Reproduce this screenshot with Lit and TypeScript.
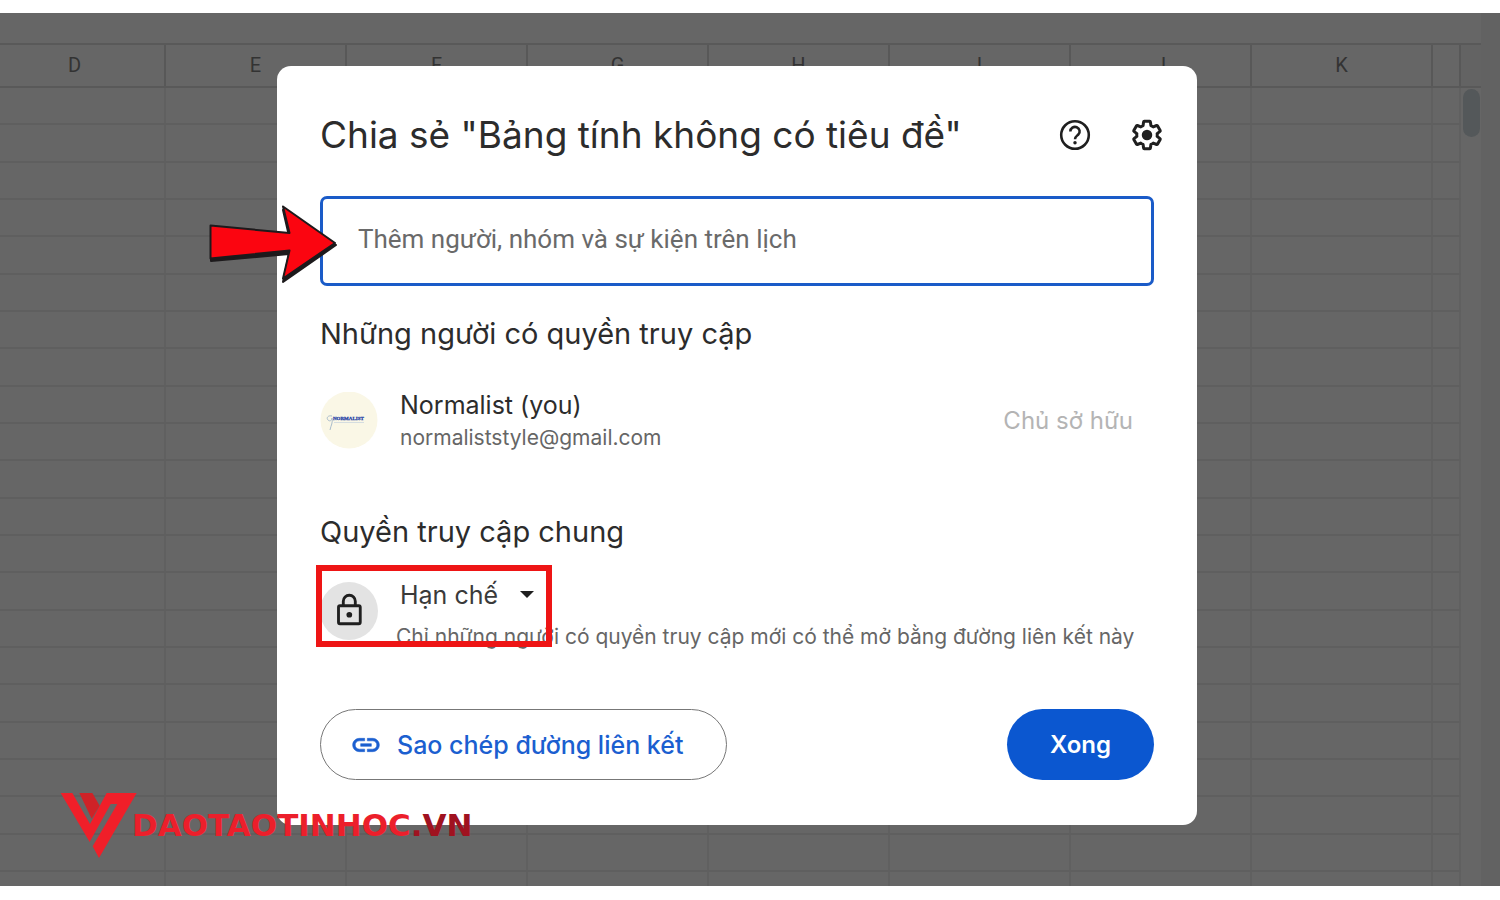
import { LitElement, html, css, svg } from "lit";
import { customElement } from "lit/decorators.js";

const COLUMNS = ["D", "E", "F", "G", "H", "I", "J", "K"];
const ROWS = Array.from({ length: 22 }, (_, i) => i);

const GEAR =
  "M19.43 12.98c.04-.32.07-.64.07-.98 0-.34-.03-.66-.07-.98l2.11-1.65c.19-.15.24-.42.12-.64l-2-3.46c-.09-.16-.26-.25-.44-.25-.06 0-.12.01-.17.03l-2.49 1c-.52-.4-1.08-.73-1.69-.98l-.38-2.65C14.46 2.18 14.25 2 14 2h-4c-.25 0-.46.18-.49.42l-.38 2.65c-.61.25-1.17.59-1.69.98l-2.49-1c-.06-.02-.12-.03-.18-.03-.17 0-.34.09-.43.25l-2 3.46c-.13.22-.07.49.12.64l2.11 1.65c-.04.32-.07.65-.07.98 0 .33.03.66.07.98l-2.11 1.65c-.19.15-.24.42-.12.64l2 3.46c.09.16.26.25.44.25.06 0 .12-.01.17-.03l2.49-1c.52.4 1.08.73 1.69.98l.38 2.65c.03.24.24.42.49.42h4c.25 0 .46-.18.49-.42l.38-2.65c.61-.25 1.17-.59 1.69-.98l2.49 1c.06.02.12.03.18.03.17 0 .34-.09.43-.25l2-3.46c.12-.22.07-.49-.12-.64l-2.11-1.65z";

@customElement("sheet-grid")
export class SheetGrid extends LitElement {
  static styles = css`
    :host {
      display: flex;
      min-height: 0;
      overflow: hidden;
      background: #666;
      font-family: Roboto, sans-serif;
    }
    .sheet {
      flex: 1;
      min-width: 0;
      display: flex;
      flex-direction: column;
      padding-top: 30px;
      overflow: hidden;
    }
    table {
      flex: 1;
      min-height: 0;
      display: flex;
      flex-direction: column;
      margin-left: -15px;
      border-top: 2px solid #595959;
    }
    tr {
      display: grid;
      grid-template-columns: repeat(8, 181px) 1fr;
    }
    thead tr {
      height: 43px;
      box-sizing: border-box;
      border-bottom: 2px solid #595959;
    }
    th {
      padding: 0;
      border-right: 2px solid #585858;
      font-size: 20px;
      font-weight: 400;
      line-height: 40px;
      color: #333;
    }
    td {
      padding: 0;
      border-right: 2px solid #606060;
    }
    tbody {
      flex: 1;
      min-height: 0;
      display: grid;
      grid-template-rows: repeat(21, 1fr) 14px;
    }
    tbody tr {
      border-bottom: 2px solid #5f5f5f;
    }
    tbody tr:last-child {
      border-bottom: 0;
    }
    .rail {
      width: 20px;
      padding-top: 30px;
    }
    .rail-head {
      height: 41px;
      border-top: 2px solid #595959;
      border-bottom: 2px solid #595959;
      background: #636363;
    }
    .thumb {
      width: 17px;
      height: 48px;
      margin: 1px auto 0;
      border-radius: 9px;
      background: #54585a;
    }
    .edge {
      width: 19px;
      background: #626262;
    }
  `;

  render() {
    return html`
      <div class="sheet">
        <table>
          <thead>
            <tr>
              ${COLUMNS.map((c) => html`<th scope="col">${c}</th>`)}
              <th></th>
            </tr>
          </thead>
          <tbody>
            ${ROWS.map(
              () => html`<tr>
                ${COLUMNS.map(() => html`<td></td>`)}
                <td></td>
              </tr>`
            )}
          </tbody>
        </table>
      </div>
      <div class="rail">
        <div class="rail-head"></div>
        <div class="thumb"></div>
      </div>
      <div class="edge"></div>
    `;
  }
}

@customElement("share-dialog")
export class ShareDialog extends LitElement {
  static styles = css`
    :host {
      display: block;
      position: relative;
      box-sizing: border-box;
      width: 920px;
      max-width: 100%;
      padding: 44px 0 45px;
      border-radius: 14px;
      background: #fff;
      color: #2c2c2c;
      font-family: Inter, sans-serif;
    }
    header {
      display: flex;
      align-items: center;
      gap: 24px;
      height: 50px;
      padding: 0 26px 0 43px;
    }
    h1,
    h2,
    p {
      margin: 0;
      font-weight: 400;
      white-space: nowrap;
    }
    h1 {
      flex: 1;
      font-size: 37px;
      line-height: 50px;
    }
    button,
    input,
    select {
      font-family: inherit;
      margin: 0;
    }
    .icon-button {
      display: grid;
      place-items: center;
      width: 48px;
      height: 48px;
      padding: 0;
      border: 0;
      border-radius: 50%;
      background: none;
      color: #1f1f1f;
    }
    .icon {
      display: block;
      width: 36px;
      height: 36px;
    }
    .body {
      padding: 36px 43px 0;
    }
    .people {
      display: block;
      box-sizing: border-box;
      width: 100%;
      height: 90px;
      padding: 0 35px 4px;
      border: 3px solid #1a5bc8;
      border-radius: 7px;
      outline: 0;
      background: #fff;
      color: #1f1f1f;
      font-family: Roboto, sans-serif;
      font-size: 26px;
    }
    .people::placeholder {
      color: #6a6a6a;
      opacity: 1;
    }
    h2 {
      font-size: 29px;
      line-height: 40px;
    }
    .people + h2 {
      margin-top: 28px;
    }
    .person {
      display: flex;
      align-items: center;
      gap: 22px;
      margin: 34px 0 58px;
    }
    .avatar {
      flex: none;
      width: 58px;
      height: 58px;
    }
    .who {
      flex: 1;
    }
    .name {
      font-size: 25px;
      line-height: 34px;
    }
    .mail {
      font-size: 21px;
      line-height: 32px;
      color: #666;
    }
    .role {
      padding-right: 21px;
      font-size: 24px;
      line-height: 32px;
      color: #b4b4b4;
    }
    .access {
      position: relative;
      display: flex;
      gap: 18px;
      margin-top: 25px;
    }
    .lock {
      flex: none;
      display: grid;
      place-items: center;
      width: 58px;
      height: 58px;
      margin-top: 5px;
      border-radius: 50%;
      background: #e3e3e3;
    }
    .scope {
      display: inline-flex;
      align-items: center;
      position: relative;
    }
    .scope select {
      appearance: none;
      height: 36px;
      padding: 0 40px 0 4px;
      border: 0;
      background: none;
      color: #3a3a3a;
      font-size: 25px;
    }
    .caret {
      position: absolute;
      right: 4px;
      width: 16px;
      height: 8px;
      pointer-events: none;
    }
    .hint {
      margin-top: 8px;
      font-size: 21px;
      line-height: 32px;
      color: #666;
    }
    .highlight {
      position: absolute;
      left: -4px;
      top: -12px;
      box-sizing: border-box;
      width: 236px;
      height: 82px;
      border: 6px solid #ee1515;
      pointer-events: none;
    }
    footer {
      display: flex;
      justify-content: space-between;
      margin-top: 56px;
    }
    .copy,
    .done {
      display: flex;
      align-items: center;
      justify-content: center;
      height: 71px;
      border-radius: 36px;
      font-size: 25px;
      white-space: nowrap;
    }
    .copy {
      gap: 15px;
      padding: 0 43px 0 29px;
      border: 1px solid #777;
      background: #fff;
      color: #1b5fd0;
      font-weight: 500;
    }
    .copy svg {
      width: 32px;
      height: 32px;
    }
    .done {
      padding: 0 43px;
      border: 0;
      background: #0b57d0;
      color: #fff;
      font-size: 24px;
      font-weight: 600;
    }
    .arrow {
      position: absolute;
      left: -69px;
      top: 136px;
      width: 132px;
      height: 84px;
      pointer-events: none;
    }
  `;

  render() {
    return html`
      <header>
        <h1>Chia sẻ "Bảng tính không có tiêu đề"</h1>
        <button class="icon-button" aria-label="Trợ giúp">
          <svg class="icon" viewBox="0 0 24 24" fill="none" stroke="currentColor">
            <circle cx="12" cy="12" r="9.200" stroke-width="1.700" />
            <path d="M8.900 9.600a3.100 3 0 1 1 5.300 2.100c-1.100 1-2.200 1.500-2.200 3.100" stroke-width="1.700" />
            <circle cx="12" cy="17.100" r="1.150" fill="currentColor" stroke="none" />
          </svg>
        </button>
        <button class="icon-button" aria-label="Cài đặt">
          <svg class="icon" viewBox="0 0 24 24">
            <g transform="translate(12 12) scale(.91) translate(-12 -12)">
              <path d=${GEAR} fill="none" stroke="currentColor" stroke-width="2.200" stroke-linejoin="round" />
            </g>
            <circle cx="12" cy="12" r="3.500" fill="currentColor" />
          </svg>
        </button>
      </header>
      <div class="body">
        <input
          class="people"
          type="text"
          aria-label="Thêm người, nhóm và sự kiện trên lịch"
          placeholder="Thêm người, nhóm và sự kiện trên lịch"
        />
        <h2>Những người có quyền truy cập</h2>
        <div class="person">
          <svg class="avatar" viewBox="0 0 58 58" aria-hidden="true">
            <circle cx="29" cy="28" r="28.500" fill="#faf7e6" />
            <text
              x="13"
              y="28"
              font-family="Liberation Serif, serif"
              font-weight="700"
              font-size="5"
              fill="#2b46a8"
              stroke="#2b46a8"
              stroke-width=".3"
            >NORMALIST</text>
            <path d="M12 24c-4-1-6 2-4 4s4 0 4-2c1 5-1 7-2 12" fill="none" stroke="#a9bccb" stroke-width="1" />
            <path d="M14 30.500h30" stroke="#d5dde0" stroke-width="1" />
          </svg>
          <div class="who">
            <p class="name">Normalist (you)</p>
            <p class="mail">normaliststyle@gmail.com</p>
          </div>
          <p class="role">Chủ sở hữu</p>
        </div>
        <h2>Quyền truy cập chung</h2>
        <div class="access">
          <div class="lock">
            <svg class="icon" viewBox="0 0 24 24" fill="none" stroke="#1f1f1f" stroke-width="1.900">
              <rect x="5" y="8.500" width="14.500" height="12" rx="1" />
              <path d="M8.200 8.500V5.500a4 4 0 0 1 8 0v3" />
              <circle cx="12.200" cy="14.500" r="1.900" fill="#1f1f1f" stroke="none" />
            </svg>
          </div>
          <div>
            <div class="scope">
              <select aria-label="Quyền truy cập chung">
                <option>Hạn chế</option>
              </select>
              <svg class="caret" viewBox="0 0 16 8" aria-hidden="true"><path d="M1 0h14L8 7z" fill="#1f1f1f" /></svg>
            </div>
            <p class="hint">Chỉ những người có quyền truy cập mới có thể mở bằng đường liên kết này</p>
          </div>
          <div class="highlight"></div>
        </div>
        <footer>
          <button class="copy">
            <svg viewBox="0 0 24 24" fill="currentColor" aria-hidden="true">
              <path
                d="M3.900 12c0-1.710 1.390-3.100 3.100-3.100h4V7H7c-2.760 0-5 2.240-5 5s2.240 5 5 5h4v-1.900H7c-1.710 0-3.100-1.390-3.100-3.100zM8 13h8v-2H8v2zm9-6h-4v1.900h4c1.710 0 3.100 1.390 3.100 3.100s-1.390 3.100-3.100 3.100h-4V17h4c2.760 0 5-2.240 5-5s-2.240-5-5-5z"
                stroke="currentColor"
                stroke-width=".4"
              />
            </svg>
            Sao chép đường liên kết
          </button>
          <button class="done">Xong</button>
        </footer>
      </div>
      <svg class="arrow" viewBox="208 202 132 84" aria-hidden="true">
        <g stroke="#1d1a1c" stroke-width="2" stroke-linejoin="round">
          <path d="M211 228L289 236 283 210 336 245 283 282 289 254 211 261z" fill="#1d1a1c" />
          <path d="M210.500 225.500L289.500 233 283 206.500 335 243 283 278.500 289.500 250.500 210.500 258.500z" fill="#fb0510" />
        </g>
      </svg>
    `;
  }
}

@customElement("site-mark")
export class SiteMark extends LitElement {
  static styles = css`
    :host {
      display: flex;
      align-items: center;
      height: 72px;
      font-family: "DejaVu Sans", sans-serif;
      font-size: 31px;
      font-weight: 700;
      line-height: 30px;
      color: #ec1f2b;
      white-space: nowrap;
    }
    svg {
      width: 90px;
      height: 75px;
      margin-right: -13px;
    }
    .tld {
      color: #a01220;
    }
  `;

  render() {
    return html`
      <svg viewBox="0 0 270 225" aria-hidden="true">
        ${svg`<path d="M73 15H112L134 53 110 92z" fill="#cf2227" />
        <path d="M17 15H52L105 108 155 15H245L132 210 113 175 187 48H167L104 162z" fill="#f01f29" />`}
      </svg>
      <span>DAOTAOTINHOC<span class="tld">.VN</span></span>
    `;
  }
}

@customElement("app-root")
export class AppRoot extends LitElement {
  static styles = css`
    :host {
      display: grid;
      position: relative;
      box-sizing: border-box;
      height: 100vh;
      padding: 13px 0 14px;
      overflow: hidden;
      background: #fff;
    }
    .overlay {
      position: absolute;
      inset: 0;
      display: flex;
      justify-content: center;
      align-items: flex-start;
      padding: 66px 26px 0 0;
    }
    site-mark {
      position: absolute;
      left: 55px;
      bottom: 39px;
    }
  `;

  render() {
    return html`
      <sheet-grid></sheet-grid>
      <div class="overlay">
        <share-dialog role="dialog" aria-label="Chia sẻ"></share-dialog>
      </div>
      <site-mark></site-mark>
    `;
  }
}
